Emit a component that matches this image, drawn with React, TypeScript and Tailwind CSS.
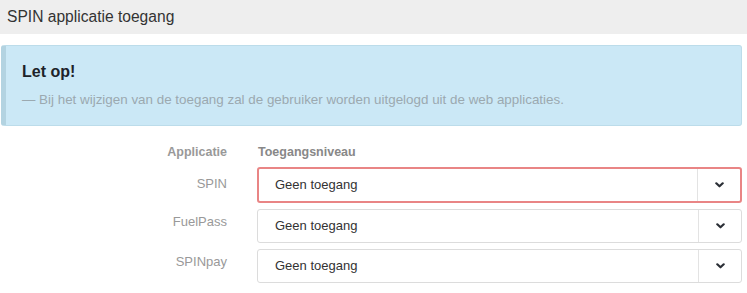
import React from "react";

const Chevron = () => (
  <svg width="9" height="6" viewBox="0 0 9 6" className="text-[#2b2f36]">
    <path d="M1.3 1.3 L4.5 4.3 L7.7 1.3" fill="none" stroke="currentColor" strokeWidth="2.2" strokeLinecap="round" strokeLinejoin="round" />
  </svg>
);

function Select({ error }: { error?: boolean }) {
  return (
    <div
      className={
        "flex items-stretch rounded-[3px] bg-white " +
        (error ? "border-2 border-[#e98585] h-[36px]" : "border border-[#dcdcdc] h-[34px]")
      }
    >
      <div className={"flex-1 flex items-center text-[13px] text-[#333] " + (error ? "pl-[16px]" : "pl-[17px]")}>
        Geen toegang
      </div>
      <div className="w-[43px] border-l border-[#e3e3e3] flex items-center justify-center">
        <Chevron />
      </div>
    </div>
  );
}

export default function App() {
  const rows = [
    { name: "SPIN", error: true },
    { name: "FuelPass" },
    { name: "SPINpay" },
  ];
  return (
    <div className="w-[747px] h-[293px] bg-white overflow-hidden" style={{ fontFamily: '"Liberation Sans", Arial, sans-serif' }}>
      <div className="h-[34px] bg-[#eeeeee] flex items-center pl-[7px] text-[15.6px] text-[#333]">
        SPIN applicatie toegang
      </div>
      <div className="mt-[11px] ml-[1px] mr-[5px] h-[81px] bg-[#cbe8f6] border border-[#bcdcea] border-l-[5px] border-l-[#b3d3e1] rounded-[3px] pl-[16px] pt-[16px]">
        <div className="text-[16px] font-bold text-[#1d2329] leading-[20px]">Let op!</div>
        <div className="mt-[9px] text-[13.4px] text-[#9ba9b0] leading-[18px]">
          — Bij het wijzigen van de toegang zal de gebruiker worden uitgelogd uit de web applicaties.
        </div>
      </div>
      <div className="mt-[17px] grid grid-cols-[227px_1fr] gap-x-[30px] pr-[5px]">
        <div className="text-right text-[12.5px] font-bold text-[#999] leading-[18px]">Applicatie</div>
        <div className="text-[12.5px] font-bold text-[#888] leading-[18px] pl-[1px]">Toegangsniveau</div>
        {rows.map((r, i) => (
          <React.Fragment key={r.name}>
            <div className={"text-right text-[13px] text-[#999] " + (i === 0 ? "mt-[6px] pt-[7px]" : "mt-[6px] pt-[3px]")}>
              {r.name}
            </div>
            <div className="mt-[6px]">
              <Select error={r.error} />
            </div>
          </React.Fragment>
        ))}
      </div>
    </div>
  );
}
